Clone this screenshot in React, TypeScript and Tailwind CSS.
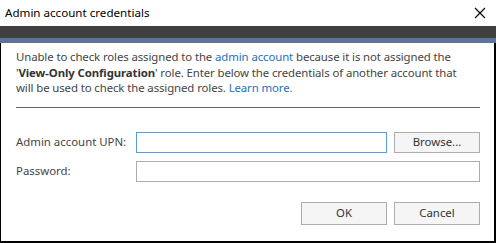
export default function App() {
  return (
    <div
      className="w-[496px] h-[243px] flex flex-col bg-white text-[#444] overflow-hidden"
      style={{ fontFamily: '"Noto Sans", "Open Sans", sans-serif' }}
    >
      {/* Title bar */}
      <div className="h-[26px] flex items-center justify-between pl-[5px] pr-[10px] bg-white">
        <span className="text-[11.6px] text-black">Admin account credentials</span>
        <svg width="12" height="12" viewBox="0 0 12 12" className="text-black">
          <path d="M1 1 L11 11 M11 1 L1 11" stroke="currentColor" strokeWidth="1.1" />
        </svg>
      </div>
      <div className="h-[12px] bg-[#404040]" />
      <div className="h-[5px] bg-[#5b7497]" />

      {/* Body */}
      <div className="flex-1 flex flex-col border-l border-r-2 border-b-2 border-black pl-[15px] pr-[14px] pt-[6px]">
        <p className="text-[11.4px] leading-[15.5px] whitespace-nowrap tracking-[-0.1px]">
          Unable to check roles assigned to the <span className="text-[#1e6fc0]">admin account</span> because it is not assigned the
          <br />
          '<b className="font-bold text-[#333]">View-Only Configuration</b>' role. Enter below the credentials of another account that
          <br />
          will be used to check the assigned roles. <span className="text-[#1e6fc0]">Learn more.</span>
        </p>
        <div className="mt-[11px] h-px bg-[#5a6a85]" />

        <div className="mt-[24px] flex items-center h-[21px]">
          <span className="w-[120px] text-[11.4px]">Admin account UPN:</span>
          <div className="w-[251px] h-[21px] border border-[#5a9be6]" />
          <button className="ml-[7px] w-[86px] h-[21px] border border-[#adadad] bg-[#f5f5f5] text-[11.4px] text-[#333]">
            Browse...
          </button>
        </div>
        <div className="mt-[8px] flex items-center h-[21px]">
          <span className="w-[120px] text-[11.4px]">Password:</span>
          <div className="w-[344px] h-[21px] border border-[#adadad]" />
        </div>

        <div className="mt-[20px] flex justify-end gap-[7px]">
          <button className="w-[86px] h-[23px] border border-[#adadad] bg-[#f5f5f5] text-[11.4px] text-[#333]">OK</button>
          <button className="w-[86px] h-[23px] border border-[#adadad] bg-[#f5f5f5] text-[11.4px] text-[#333]">Cancel</button>
        </div>
      </div>
    </div>
  );
}
